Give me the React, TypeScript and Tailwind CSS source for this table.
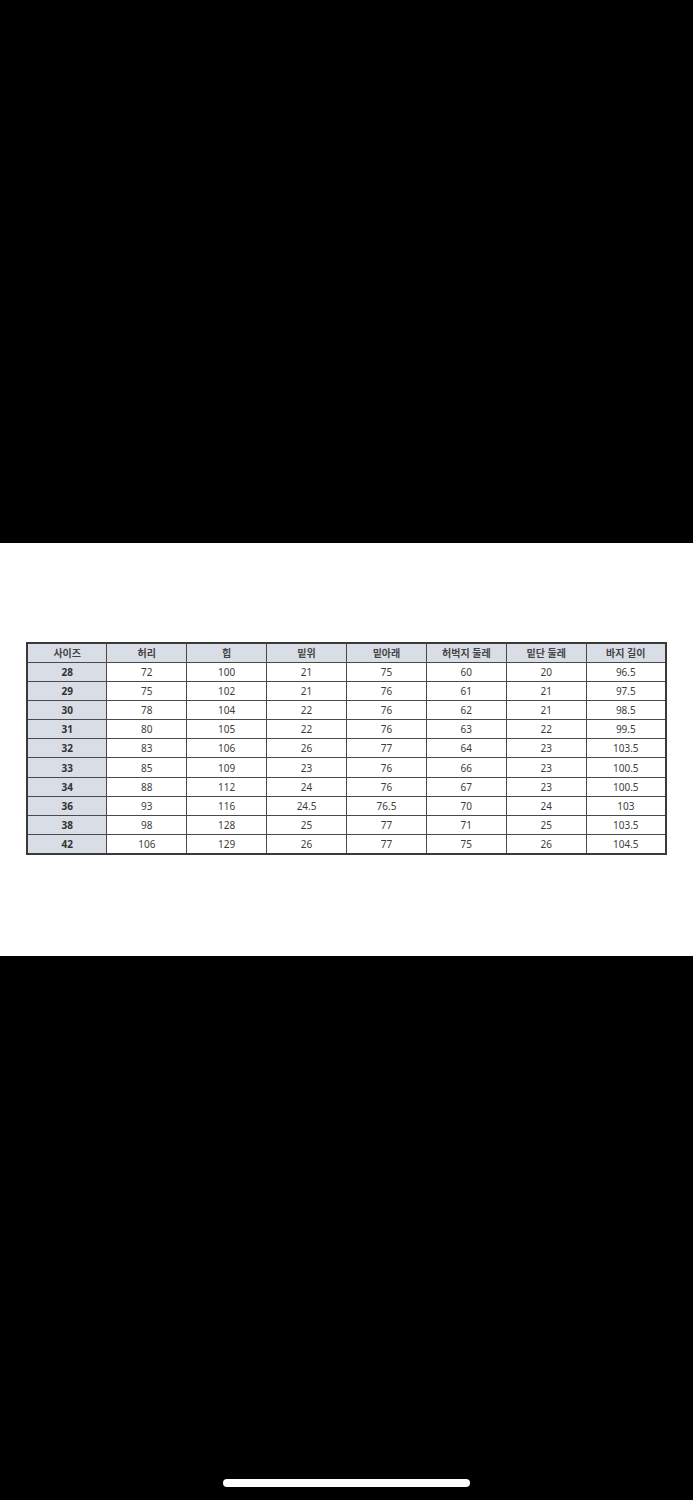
import React from "react"

const headers = ["사이즈", "허리", "힙", "밑위", "밑아래", "허벅지 둘레", "밑단 둘레", "바지 길이"]

const rows: string[][] = [
  ["28", "72", "100", "21", "75", "60", "20", "96.5"],
  ["29", "75", "102", "21", "76", "61", "21", "97.5"],
  ["30", "78", "104", "22", "76", "62", "21", "98.5"],
  ["31", "80", "105", "22", "76", "63", "22", "99.5"],
  ["32", "83", "106", "26", "77", "64", "23", "103.5"],
  ["33", "85", "109", "23", "76", "66", "23", "100.5"],
  ["34", "88", "112", "24", "76", "67", "23", "100.5"],
  ["36", "93", "116", "24.5", "76.5", "70", "24", "103"],
  ["38", "98", "128", "25", "77", "71", "25", "103.5"],
  ["42", "106", "129", "26", "77", "75", "26", "104.5"],
]

export default function App() {
  return (
    <div
      className="w-[693px] h-[1500px] bg-black flex flex-col"
      style={{ fontFamily: '"Noto Sans", "Noto Sans CJK KR", sans-serif' }}
    >
      <div className="h-[543px]" />
      <div className="h-[413px] bg-white pt-[99px]">
        <table className="mx-auto w-[641px] table-fixed border-collapse border-2 border-[#3a3a3a] text-[10px] leading-none text-[#3d3d3d]">
          <thead>
            <tr className="bg-[#d8dde6]">
              {headers.map((h) => (
                <th key={h} className="h-[19px] border border-[#4a4a4a] font-bold text-[#444] text-center">
                  {h}
                </th>
              ))}
            </tr>
          </thead>
          <tbody>
            {rows.map((r) => (
              <tr key={r[0]}>
                {r.map((c, i) => (
                  <td
                    key={i}
                    className={
                      i === 0
                        ? "h-[19.2px] border border-[#4a4a4a] bg-[#d8dde6] text-center font-bold text-[#333]"
                        : "h-[19.2px] border border-[#4a4a4a] text-center"
                    }
                  >
                    {c}
                  </td>
                ))}
              </tr>
            ))}
          </tbody>
        </table>
      </div>
      <div className="flex-1 flex flex-col justify-end items-center pb-[13px]">
        <div className="w-[247px] h-[8px] rounded-full bg-white" />
      </div>
    </div>
  )
}
